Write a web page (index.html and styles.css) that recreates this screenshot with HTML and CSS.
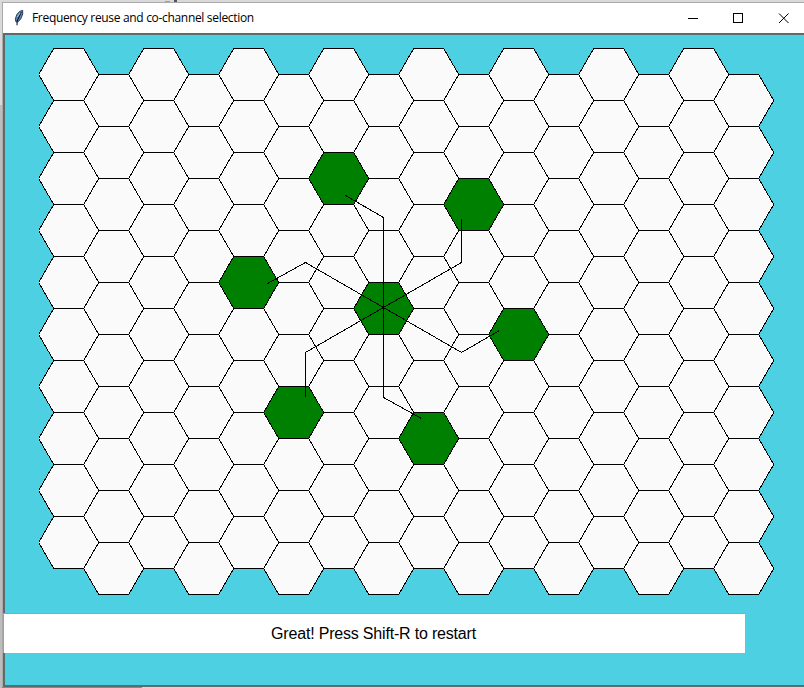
FILE: index.html
```html
<!DOCTYPE html>
<html lang="en">
<head>
<meta charset="utf-8">
<title>Frequency reuse and co-channel selection</title>
<link rel="stylesheet" href="styles.css">
</head>
<body>
<main class="window">
  <header class="titlebar">
    <svg class="feather" width="12" height="18" viewBox="0 0 12 18">
      <path d="M3 13 2.300 10 3.800 5.500 6.500 2.500 9.700 1.300 9.700 5 8 9.500 5.500 12.500Z" fill="#5b86b8" stroke="#22354c" stroke-width=".9"/>
      <path d="M4 16.300 4.200 12 8.300 3" fill="none" stroke="#101823" stroke-width="1.100"/>
      <path d="M4.300 8 7.300 3.800" stroke="#a9c7e6" stroke-width="1"/>
    </svg>
    <h1 class="title">Frequency reuse and co-channel selection</h1>
    <svg class="controls" width="104" height="12" viewBox="0 0 104 12">
      <path d="M1 6.500H11"/>
      <rect x="46.500" y="1.500" width="9" height="9"/>
      <path class="close" d="M92 1.500 101.500 11M101.500 1.500 92 11"/>
    </svg>
  </header>
  <section class="client">
    <svg class="grid" width="799" height="578" viewBox="5 35 799 578">
      <defs>
        <!-- Opposite edges run in the same direction so shared borders overlap exactly. -->
        <g id="hex">
          <path class="face" d="M38.700 74.500 53.700 48.500H83.700L98.700 74.500 83.700 100.500H53.700Z"/>
          <path class="edge" d="M38.700 74.500 53.700 48.500M83.700 100.500 98.700 74.500M53.700 48.500H83.700M53.700 100.500H83.700M83.700 48.500 98.700 74.500M38.700 74.500 53.700 100.500"/>
        </g>
        <g id="column">
          <use href="#hex"/><use href="#hex" y="52"/><use href="#hex" y="104"/><use href="#hex" y="156"/><use href="#hex" y="208"/>
          <use href="#hex" y="260"/><use href="#hex" y="312"/><use href="#hex" y="364"/><use href="#hex" y="416"/><use href="#hex" y="468"/>
        </g>
        <g id="pair"><use href="#column"/><use href="#column" x="45" y="26"/></g>
      </defs>
      <g class="cells">
        <use href="#pair"/><use href="#pair" x="90"/><use href="#pair" x="180"/><use href="#pair" x="270"/>
        <use href="#pair" x="360"/><use href="#pair" x="450"/><use href="#pair" x="540"/><use href="#pair" x="630"/>
      </g>
      <g class="cells selected">
        <use href="#hex" x="270" y="104"/>
        <use href="#hex" x="405" y="130"/>
        <use href="#hex" x="180" y="208"/>
        <use href="#hex" x="315" y="234"/>
        <use href="#hex" x="450" y="260"/>
        <use href="#hex" x="225" y="338"/>
        <use href="#hex" x="360" y="364"/>
      </g>
      <g class="paths">
        <path d="M383.500 307.500V217.500L345.500 195.500"/>
        <path d="M383.500 307.500 461.500 262.500V218.500"/>
        <path d="M383.500 307.500 305.500 262.500 267.500 283.500"/>
        <path d="M383.500 307.500 461.500 352.500 499.500 330.500"/>
        <path d="M383.500 307.500 305.500 352.500V396.500"/>
        <path d="M383.500 307.500V397.500L421.500 418.500"/>
      </g>
    </svg>
    <p class="status">Great! Press Shift-R to restart</p>
  </section>
</main>
</body>
</html>
```
FILE: styles.css
```css
* { box-sizing: border-box; }

body {
  margin: 0;
  height: 688px;
  overflow: hidden;
  padding: 2px 0 1px 2px;
  background:
    linear-gradient(#555, #555) 174px 0 / 3px 2px no-repeat,
    linear-gradient(#b99a92, #b99a92) 165px 1px / 5px 1px no-repeat,
    linear-gradient(#bdbdbd, #bdbdbd) 0 105px / 2px 583px no-repeat,
    linear-gradient(#888, #888) 0 687px / 142px 1px no-repeat,
    #d9d9d9;
}

.window {
  display: flex;
  flex-direction: column;
  width: 802px;
  height: 685px;
  border-top: 1px solid #aaa;
  border-left: 1px solid #aaa;
}

.titlebar {
  display: flex;
  align-items: center;
  flex: none;
  height: 30px;
  padding: 0 13px 0 10px;
  background: #fff;
}

.feather { margin-right: 7px; }

.title {
  flex: 1;
  margin: 0;
  font: 400 12px/30px "Open Sans", "Noto Sans", sans-serif;
  letter-spacing: -0.32px;
  color: #000;
  white-space: nowrap;
}

.controls {
  fill: none;
  stroke: #000;
  stroke-width: 1;
}

.client {
  flex: 1;
  border: solid #5f6b6b;
  border-width: 2px 0 2px 2px;
  background: #4dd0e1;
}

.grid {
  display: block;
  shape-rendering: crispEdges;
}

.cells { fill: #fafafa; }

.selected { fill: #008000; }

.edge {
  fill: none;
  stroke: #000;
  stroke-width: 1;
}

.paths {
  fill: none;
  stroke: #000;
  stroke-width: 1;
}

.status {
  width: 742px;
  height: 40px;
  margin: 0 0 0 -2px;
  padding-right: 2px;
  border-top: 1px solid #a0a0a0;
  border-left: 1px solid #a0a0a0;
  background: #fff;
  font: 16px/39px "Liberation Sans", Arial, sans-serif;
  letter-spacing: -0.19px;
  color: #000;
  text-align: center;
}
```
